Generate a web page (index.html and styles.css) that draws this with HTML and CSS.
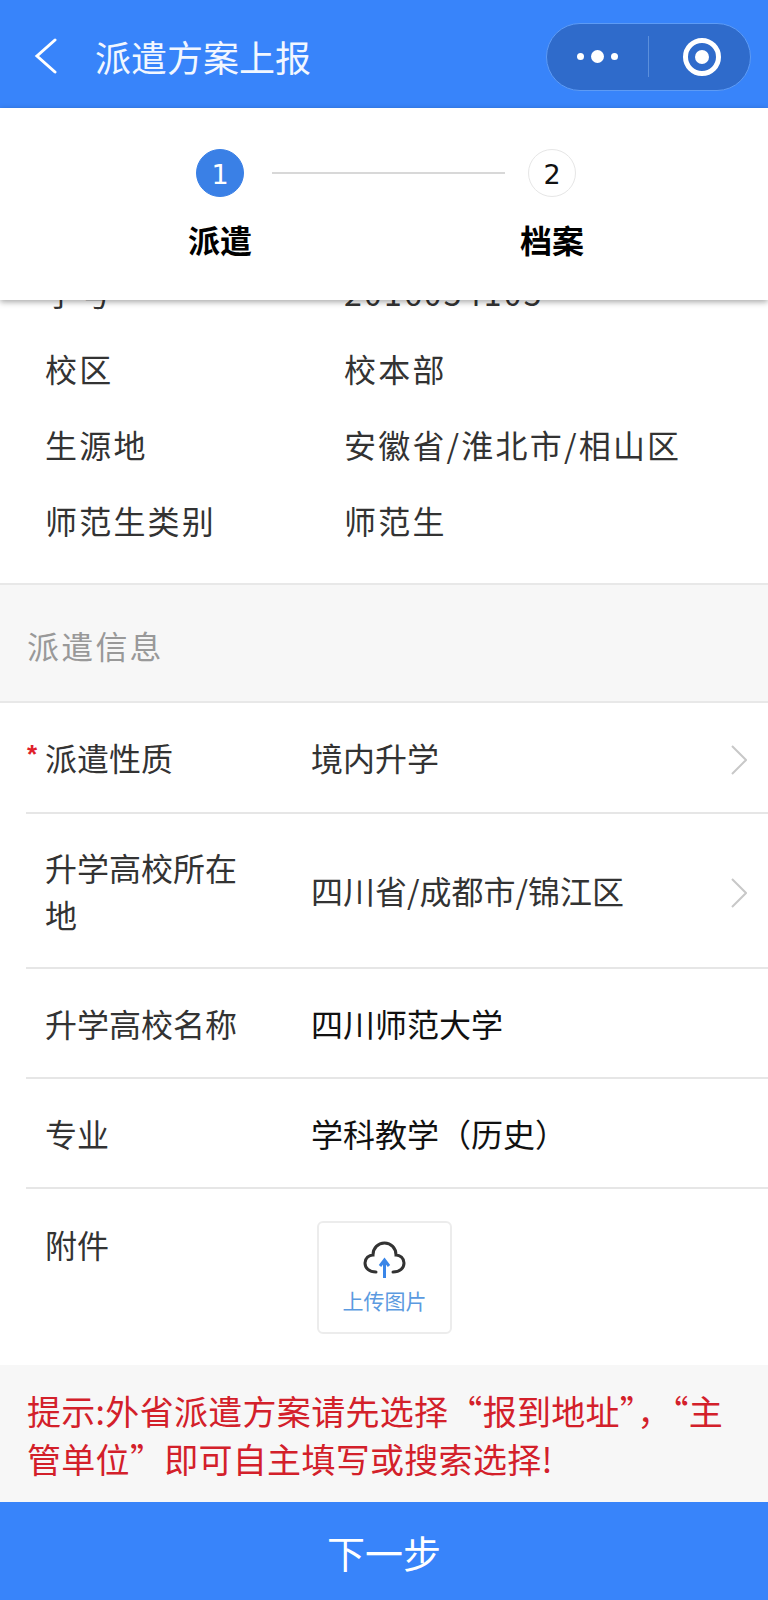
FILE: index.html
```html
<!DOCTYPE html>
<html lang="zh-CN">
<head>
  <meta charset="UTF-8">
  <title>派遣方案上报</title>
  <link rel="stylesheet" href="styles.css">
</head>
<body>
  <header class="navbar">
    <svg class="back-icon" viewBox="0 0 24 36"><path d="M22 2 L4 18 L22 34" /></svg>
    <span class="nav-title">派遣方案上报</span>
    <div class="capsule">
      <div class="capsule-dots"><i></i><i class="big"></i><i></i></div>
      <div class="capsule-line"></div>
      <div class="capsule-target"><i></i></div>
    </div>
  </header>

  <section class="steps">
    <div class="step">
      <div class="step-num active">1</div>
      <div class="step-name">派遣</div>
    </div>
    <div class="step-line"></div>
    <div class="step">
      <div class="step-num">2</div>
      <div class="step-name">档案</div>
    </div>
  </section>

  <main class="content">
    <div class="info-list">
      <div class="info-row"><span class="info-key">学号</span><span>2016054105</span></div>
      <div class="info-row"><span class="info-key">校区</span><span>校本部</span></div>
      <div class="info-row"><span class="info-key">生源地</span><span>安徽省/淮北市/相山区</span></div>
      <div class="info-row"><span class="info-key">师范生类别</span><span>师范生</span></div>
    </div>

    <div class="section-title">派遣信息</div>

    <div class="form-row first">
      <div class="form-label"><span class="required">*</span>派遣性质</div>
      <div class="form-value">境内升学</div>
      <svg class="chevron" viewBox="0 0 16 30"><path d="M1 1 L15 15 L1 29" /></svg>
    </div>
    <div class="form-row tall">
      <div class="form-label">升学高校所在地</div>
      <div class="form-value">四川省/成都市/锦江区</div>
      <svg class="chevron" viewBox="0 0 16 30"><path d="M1 1 L15 15 L1 29" /></svg>
    </div>
    <div class="form-row">
      <div class="form-label">升学高校名称</div>
      <div class="form-value dark">四川师范大学</div>
    </div>
    <div class="form-row">
      <div class="form-label">专业</div>
      <div class="form-value dark">学科教学（历史）</div>
    </div>
    <div class="form-row upload-row">
      <div class="form-label">附件</div>
      <div class="upload-box">
        <svg class="cloud-icon" viewBox="0 0 44 38">
          <path class="cloud" d="M13 31 C6 31 2 27 2 22 C2 17 6 14 10 14 C10 7 15 2 21.5 2 C28 2 33 7 33 14 C37 14 41 17 41 22 C41 27 37 31 30 31" />
          <path class="arrow" d="M21.5 37 V20 M17 25 L21.5 19 L26 25" />
        </svg>
        <div class="upload-text">上传图片</div>
      </div>
    </div>

    <div class="tip">提示:外省派遣方案请先选择“报到地址”，“主管单位”即可自主填写或搜索选择!</div>
  </main>

  <div class="next-btn">下一步</div>
</body>
</html>
```

FILE: styles.css
```css
* {
  box-sizing: border-box;
}
body {
  margin: 0;
  height: 1600px;
  overflow: hidden;
  font-family: "Noto Sans CJK SC", "Noto Sans", sans-serif;
  background: #fff;
  display: flex;
  flex-direction: column;
}
.navbar {
  height: 108px;
  background: #3884fa;
  color: #f2f7ff;
  display: flex;
  align-items: center;
  padding: 0 17px 0 33px;
  flex: none;
}
.back-icon {
  width: 24px;
  height: 36px;
  margin: 4px 38px 0 0;
}
.back-icon path {
  fill: none;
  stroke: #fff;
  stroke-width: 3;
  stroke-linecap: round;
}
.nav-title {
  font-size: 36px;
  margin-top: 3px;
}
.capsule {
  margin-left: auto;
  width: 205px;
  height: 68px;
  margin-top: 5px;
  border-radius: 34px;
  background: #2f6bcb;
  border: 1px solid #5d9bf5;
  display: flex;
  align-items: center;
}
.capsule-dots {
  width: 101px;
  display: flex;
  justify-content: center;
  align-items: center;
  gap: 7px;
}
.capsule-dots i {
  width: 7px;
  height: 7px;
  background: #fff;
  border-radius: 50%;
}
.capsule-dots i.big {
  width: 13px;
  height: 13px;
}
.capsule-line {
  width: 1px;
  height: 41px;
  background: #5b8fdc;
}
.capsule-target {
  flex: 1;
  display: flex;
  justify-content: center;
  padding-left: 4px;
}
.capsule-target i {
  width: 38px;
  height: 38px;
  border: 5px solid #fff;
  border-radius: 50%;
  display: flex;
  align-items: center;
  justify-content: center;
}
.capsule-target i::after {
  content: "";
  width: 14px;
  height: 14px;
  background: #fff;
  border-radius: 50%;
}

.steps {
  height: 192px;
  flex: none;
  background: #fff;
  box-shadow: 0 2px 6px rgba(0,0,0,0.35);
  position: relative;
  z-index: 2;
  display: flex;
  justify-content: center;
  align-items: flex-start;
  padding-top: 41px;
  padding-left: 4px;
}
.step {
  width: 100px;
  display: flex;
  flex-direction: column;
  align-items: center;
}
.step-num {
  width: 48px;
  height: 48px;
  border-radius: 50%;
  border: 1px solid #e6e6e6;
  font-family: "DejaVu Sans", sans-serif;
  font-size: 27px;
  line-height: 50px;
  text-align: center;
  color: #111;
}
.step-num.active {
  background: #3a80e6;
  border-color: #3a80e6;
  color: #fff;
}
.step-name {
  margin-top: 18px;
  font-size: 32px;
  line-height: 48px;
  font-weight: 700;
  color: #000;
}
.step-line {
  width: 233px;
  height: 2px;
  margin: 23px -3px 0 2px;
  background: #d8d8d8;
  flex: none;
}

.content {
  flex: 1;
  margin-top: -46px;
  min-height: 0;
}
.info-list {
  padding: 0 0 25px 45px;
}
.info-row {
  height: 76px;
  display: flex;
  align-items: center;
  font-size: 32px;
  letter-spacing: 2.2px;
  color: #333;
}
.info-key {
  width: 299px;
  flex: none;
}
.section-title {
  height: 120px;
  background: #f7f7f7;
  border-top: 2px solid #e8e8e8;
  border-bottom: 2px solid #e8e8e8;
  padding: 4px 0 0 27px;
  display: flex;
  align-items: center;
  font-size: 32px;
  letter-spacing: 2.2px;
  color: #999;
}
.form-row {
  margin-left: 26px;
  height: 110px;
  border-bottom: 2px solid #e6e6e6;
  display: flex;
  align-items: center;
  padding-left: 19px;
  color: #333;
  font-size: 32px;
  line-height: 47px;
}
.form-row.first {
  height: 111px;
}
.form-row.tall {
  height: 155px;
}
.form-label {
  width: 266px;
  padding-right: 58px;
  flex: none;
  position: relative;
}
.required {
  position: absolute;
  left: -18px;
  top: -3px;
  color: #e0202a;
  font-family: "Liberation Sans", sans-serif;
  font-weight: 700;
  font-size: 26px;
}
.form-value {
  flex: 1;
  color: #333;
}
.form-value.dark {
  color: #111;
}
.chevron {
  width: 16px;
  height: 30px;
  margin: 4px 21px 0 0;
}
.chevron path {
  fill: none;
  stroke: #c8c8c8;
  stroke-width: 2;
}
.upload-row {
  height: 176px;
  border-bottom: none;
  align-items: flex-start;
}
.upload-row .form-label {
  margin-top: 32px;
}
.upload-box {
  width: 135px;
  height: 113px;
  margin: 32px 0 0 6px;
  border: 2px solid #ececec;
  border-radius: 6px;
  display: flex;
  flex-direction: column;
  align-items: center;
  padding-top: 18px;
}
.cloud-icon {
  width: 44px;
  height: 38px;
  flex: none;
}
.cloud {
  fill: none;
  stroke: #333;
  stroke-width: 3;
  stroke-linecap: round;
}
.arrow {
  fill: none;
  stroke: #3a86e8;
  stroke-width: 3;
}
.upload-text {
  font-size: 21px;
  line-height: 28px;
  margin-top: 7px;
  color: #5b9ae0;
}
.tip {
  background: #f7f7f7;
  height: 137px;
  padding: 22px 20px 0 27px;
  font-size: 34px;
  line-height: 48px;
  letter-spacing: 0.3px;
  color: #d3202a;
}
.next-btn {
  height: 98px;
  flex: none;
  background: #3884fa;
  color: #fff;
  font-size: 38px;
  display: flex;
  align-items: center;
  justify-content: center;
}
```
